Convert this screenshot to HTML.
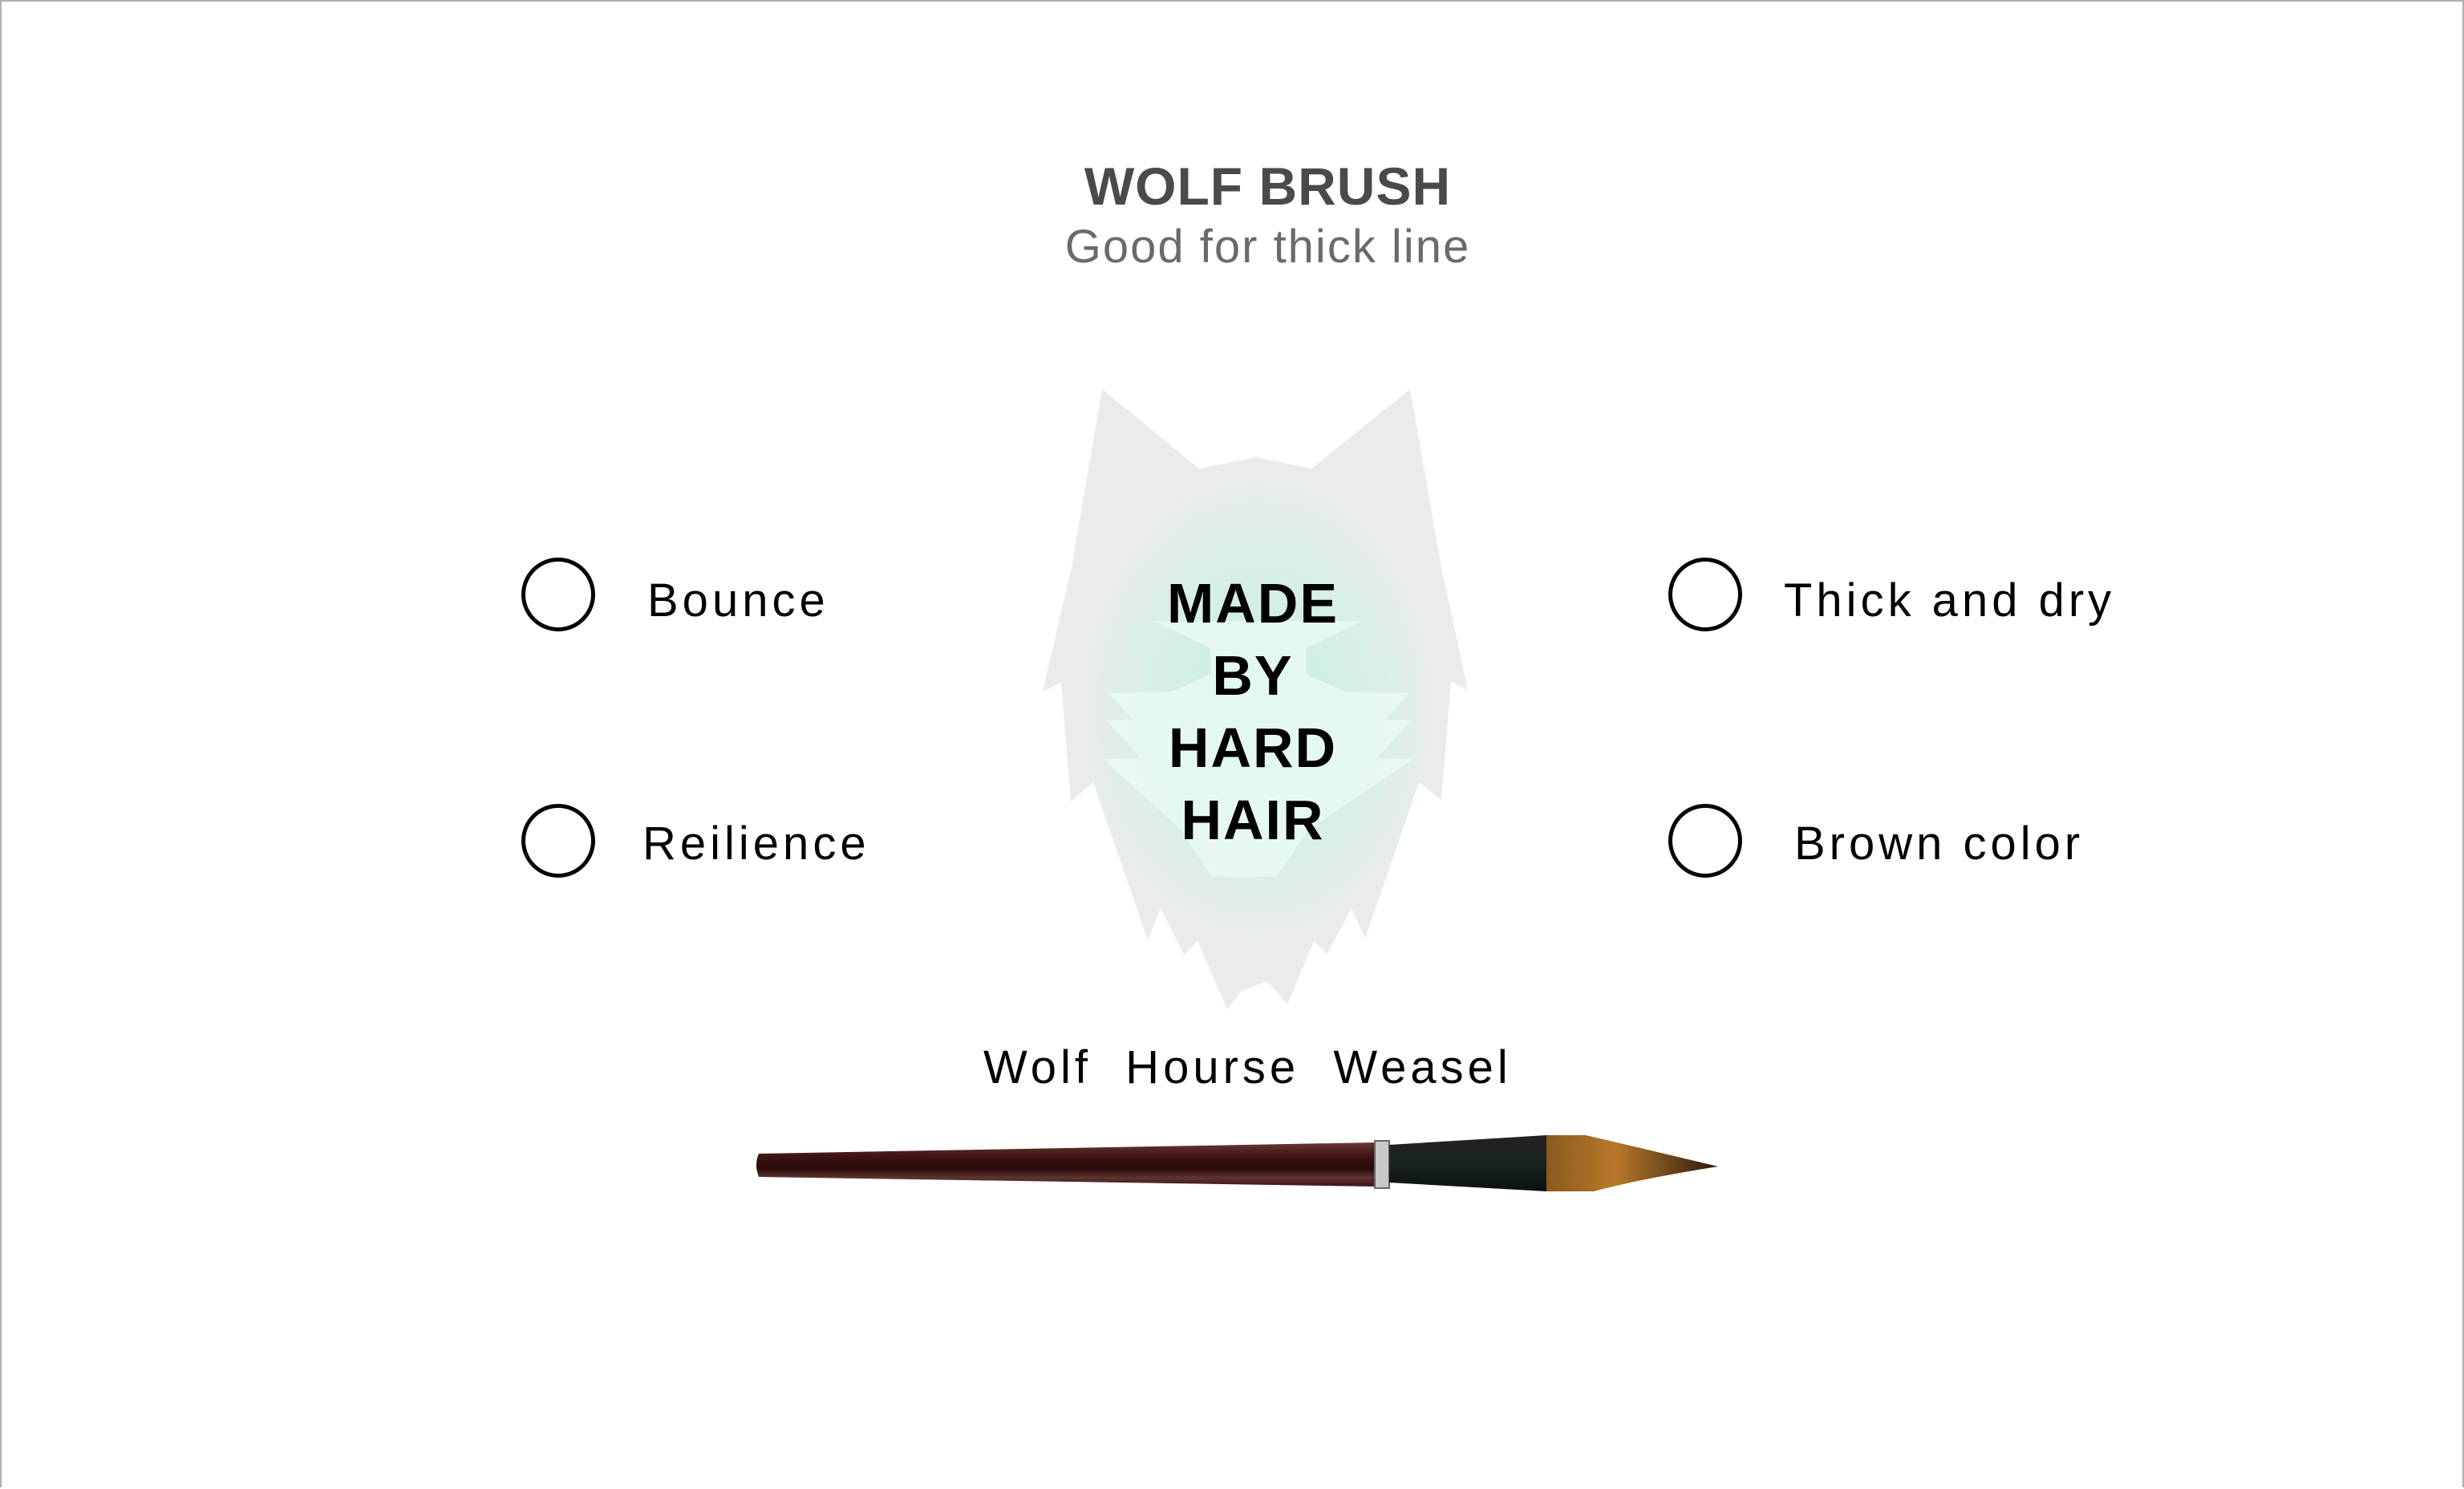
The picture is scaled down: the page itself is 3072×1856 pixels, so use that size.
<!DOCTYPE html>
<html><head><meta charset="utf-8"><style>
html,body{margin:0;padding:0;background:#fff}
body{width:3072px;height:1854px;position:relative;overflow:hidden;font-family:"Liberation Sans",sans-serif;box-sizing:border-box;border:2px solid #b0b0b0;border-bottom:none}
.t{position:absolute;white-space:nowrap}
.c{position:absolute;width:82px;height:82px;border:5px solid #000;border-radius:50%;box-sizing:content-box}
.lab{position:absolute;font-size:58px;letter-spacing:5px;color:#000;line-height:1}
</style></head><body>
<div class="t" style="left:0;width:3157px;top:192px;text-align:center;font-size:66px;font-weight:bold;color:#4a4a4a;letter-spacing:1px">WOLF BRUSH</div>
<div class="t" style="left:0;width:3157px;top:272px;text-align:center;font-size:58px;color:#6a6a6a;letter-spacing:2px">Good for thick line</div>

<svg style="position:absolute;left:0;top:0" width="3072" height="1854">
<defs>
<radialGradient id="g" cx="1567" cy="880" r="230" gradientUnits="userSpaceOnUse" gradientTransform="translate(1567 880) scale(1 1.3) translate(-1567 -880)">
<stop offset="0" stop-color="#c6ece2"/><stop offset="0.6" stop-color="#d8efe9"/><stop offset="1" stop-color="#ebebeb"/>
</radialGradient>
<linearGradient id="h" x1="0" y1="0" x2="0" y2="1">
<stop offset="0" stop-color="#6b3a37"/><stop offset="0.3" stop-color="#3e1414"/><stop offset="0.6" stop-color="#2a0b0b"/><stop offset="0.8" stop-color="#5e3431"/><stop offset="1" stop-color="#3a1616"/>
</linearGradient>
<linearGradient id="k" x1="0" y1="0" x2="0" y2="1">
<stop offset="0" stop-color="#222"/><stop offset="0.5" stop-color="#1b241f"/><stop offset="1" stop-color="#0b0f14"/>
</linearGradient>
<linearGradient id="b" x1="0" y1="0" x2="1" y2="0">
<stop offset="0" stop-color="#8a5a1e"/><stop offset="0.4" stop-color="#b8782a"/><stop offset="1" stop-color="#2a1a0c"/>
</linearGradient>
<clipPath id="w"><polygon id="wp" points="1372,483 1493,582 1564,568 1633,582 1756,483 1795,705 1828,858 1807,847 1795,995 1767,973 1700,1168 1683,1130 1653,1187 1636,1171 1603,1250 1578,1221 1546,1233 1528,1256 1491,1171 1474,1188 1445,1130 1429,1170 1361,973 1333,997 1321,849 1298,860 1334,705"/></clipPath>
</defs>
<polygon fill="#ebebeb" points="1372,483 1493,582 1564,568 1633,582 1756,483 1795,705 1828,858 1807,847 1795,995 1767,973 1700,1168 1683,1130 1653,1187 1636,1171 1603,1250 1578,1221 1546,1233 1528,1256 1491,1171 1474,1188 1445,1130 1429,1170 1361,973 1333,997 1321,849 1298,860 1334,705"/>
<g clip-path="url(#w)">
<ellipse cx="1567" cy="880" rx="240" ry="300" fill="url(#g)"/>
<polygon fill="#eafaf6" opacity="0.8" points="1437,772 1507,806 1507,838 1460,860 1380,862 1410,895 1378,896 1420,943 1373,944 1470,1032 1508,1090 1555,1092 1590,1090 1630,1032 1760,944 1715,943 1757,896 1725,895 1755,862 1675,860 1626,838 1626,806 1697,772"/>
</g>
<path d="M944,1436 L1715,1422 L1715,1477 L944,1465 Q938,1450 944,1436Z" fill="url(#h)"/>
<rect x="1712" y="1420" width="18" height="59" fill="#c8c8c8" stroke="#666" stroke-width="2"/>
<path d="M1730,1425 L1926,1413 L1926,1483 L1730,1472Z" fill="url(#k)"/>
<path d="M1926,1413 L1975,1413 Q2040,1428 2140,1452 Q2040,1468 1985,1483 L1926,1483Z" fill="url(#b)"/>
</svg>

<div class="t" style="left:1360px;width:400px;top:705px;text-align:center;font-size:70px;font-weight:bold;line-height:90px;color:#000;letter-spacing:2px">MADE<br>BY<br>HARD<br>HAIR</div>

<div class="c" style="left:648px;top:693px"></div>
<div class="c" style="left:648px;top:1000px"></div>
<div class="c" style="left:2078px;top:693px"></div>
<div class="c" style="left:2078px;top:1000px"></div>
<div class="lab" style="left:805px;top:718px">Bounce</div>
<div class="lab" style="left:799px;top:1021px">Reilience</div>
<div class="lab" style="left:2222px;top:718px">Thick and dry</div>
<div class="lab" style="left:2235px;top:1021px">Brown color</div>
<div class="lab" style="left:1224px;top:1300px;letter-spacing:5px">Wolf&nbsp; Hourse&nbsp; Weasel</div>
</body></html>
